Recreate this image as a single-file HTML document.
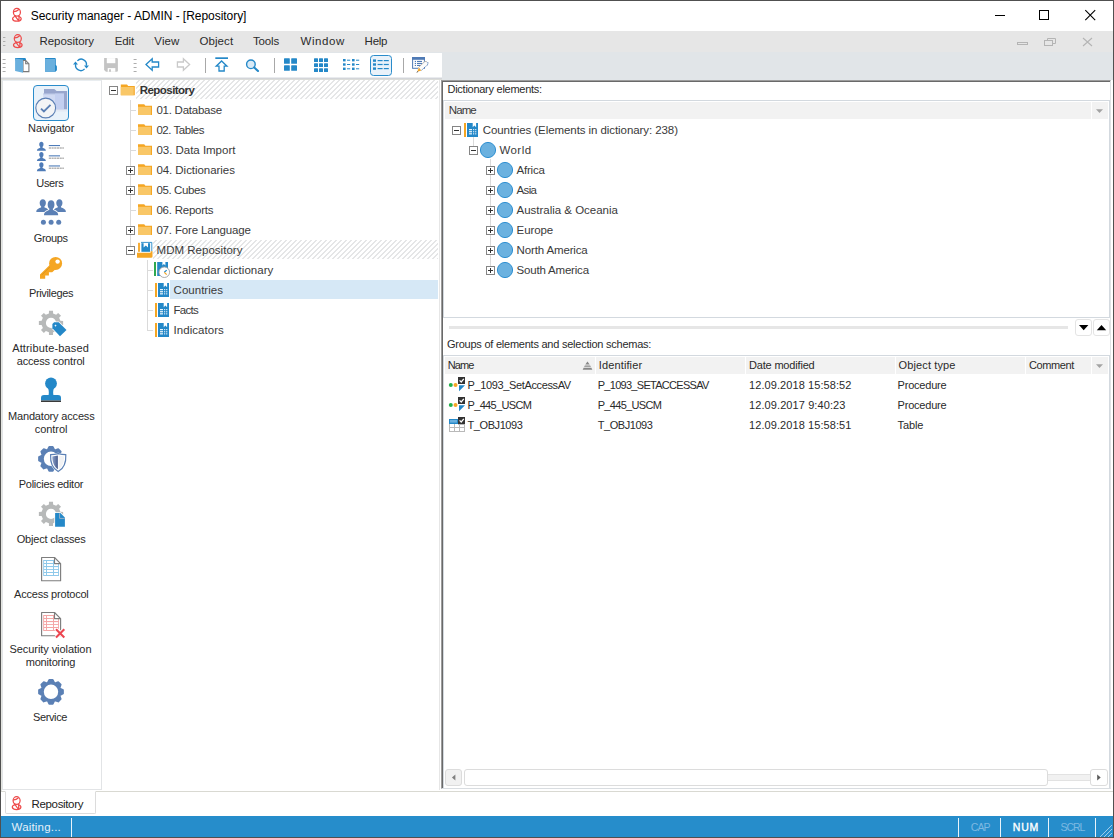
<!DOCTYPE html>
<html lang="en"><head><meta charset="utf-8"><title>Security manager - ADMIN - [Repository]</title>
<style>
html,body{margin:0;padding:0;background:#fff;}
body{width:1114px;height:838px;overflow:hidden;font-family:"Liberation Sans",sans-serif;}
#win{position:relative;width:1114px;height:838px;overflow:hidden;background:#fff;}
#win div,#win svg,#win span{position:absolute;box-sizing:border-box;}
.t{white-space:pre;line-height:16px;height:16px;}
#frame{left:0;top:0;width:1114px;height:838px;border:1px solid #505050;z-index:50;pointer-events:none;}
#titlebar{left:1px;top:1px;width:1112px;height:30px;background:#fff;}
#menubar{left:1px;top:31px;width:1112px;height:21px;background:#e6e6e6;}
#menuline{left:1px;top:52px;width:1112px;height:1px;background:#e1e5e8;}
#rebar{left:1px;top:53px;width:1112px;height:27px;background:#e1e5e8;}
#toolbar{left:1px;top:53px;width:441px;height:24px;background:#fff;}
#toolshade{left:1px;top:77px;width:441px;height:3px;background:linear-gradient(#e9ebee 0,#e9ebee 33.3%,#d3d5d9 33.3%,#d3d5d9 66.6%,#dcddd9 66.6%);}
#leftstrip{left:1px;top:80px;width:1px;height:711px;background:#e3e4df;}
#navpanel{left:2px;top:80px;width:100px;height:710px;background:#fff;border:1px solid #e2e4e6;border-top:1px solid #e9edf0;}
#treepanel{left:102px;top:80px;width:338px;height:710px;background:#fff;border-right:1px solid #e6e6e6;}
.hatch{background:repeating-linear-gradient(135deg,#fff 0,#fff 1.45px,#e5e6e7 1.45px,#e5e6e7 3.5355px);}
#navsel{left:33px;top:85px;width:36px;height:36px;border:1px solid #2a8ccb;border-radius:4px;background:#e9f2fa;}
#treesel{left:170px;top:280px;width:268px;height:19px;background:#d6e8f6;}
#rpanel{left:441px;top:80px;width:670px;height:709px;background:#fff;border-top:1px solid #9c9c9c;border-left:1px solid #9c9c9c;border-right:1px solid #e0e3e6;border-bottom:1px solid #d9dde1;}
#rpanel2{left:442px;top:81px;width:668px;height:707px;border-top:1px solid #696969;border-left:1px solid #696969;}
#dictbox{left:443px;top:100px;width:667px;height:218px;border:1px solid #d3d9df;background:#fff;}
.hd{background:#f2f2f2;}
#splitline{left:449px;top:326px;width:619px;height:3px;background:#e6e6e6;}
.sbtn{width:17px;height:17px;top:319px;border:1px solid #e4e4e4;border-radius:3px;background:#fff;}
#tablebox{left:443px;top:355px;width:667px;height:433px;border:1px solid #d3d9df;border-bottom:none;background:#fff;}
#tabline{left:1px;top:791px;width:1112px;height:1px;background:#d9d9d2;}
#tab{left:5px;top:791px;width:91px;height:23px;background:#fff;border:1px solid #dcdcdc;border-top:1px solid #fff;border-radius:0 0 2px 2px;}
#status{left:1px;top:816px;width:1112px;height:21px;background:#268dcb;}
.ssep{top:818px;width:1px;height:19px;background:#e9f3fa;}
.sb{top:769px;height:17px;border:1px solid #dcdcdc;border-radius:3px;}
#labels{left:0;top:0;width:1114px;height:838px;}

</style></head>
<body>
<div id="win">
<div id="titlebar"></div>
<div id="menubar"></div>
<div id="menuline"></div>
<div id="rebar"></div>
<div id="toolbar"></div>
<div id="toolshade"></div>
<div id="leftstrip"></div>
<div id="navpanel"></div>
<div id="treepanel"></div>
<div class="hatch" style="left:136px;top:80px;width:302px;height:19px"></div>
<div class="hatch" style="left:153px;top:240px;width:285px;height:19px"></div>
<div id="navsel"></div>
<div id="treesel"></div>
<div id="rpanel"></div>
<div id="rpanel2"></div>
<div id="dictbox"></div>
<div class="hd" style="left:445px;top:102px;width:646px;height:17px"></div>
<div class="hd" style="left:1092px;top:102px;width:16px;height:17px"></div>
<div id="splitline"></div>
<div class="sbtn" style="left:1075px"></div>
<div class="sbtn" style="left:1093px"></div>
<div id="tablebox"></div>
<div class="hd" style="left:445px;top:357px;width:150px;height:17px"></div>
<div class="hd" style="left:596px;top:357px;width:149px;height:17px"></div>
<div class="hd" style="left:746px;top:357px;width:149px;height:17px"></div>
<div class="hd" style="left:896px;top:357px;width:129px;height:17px"></div>
<div class="hd" style="left:1026px;top:357px;width:65px;height:17px"></div>
<div class="hd" style="left:1092px;top:357px;width:16px;height:17px"></div>
<div class="sb" style="left:445px;width:17px;background:#f1f1f1"></div>
<div class="sb" style="left:464px;width:584px;background:#fff"></div>
<div style="left:1048px;top:774px;width:42px;height:7px;background:#f1f1f1;border-top:1px solid #e2e2e2;border-bottom:1px solid #e2e2e2"></div>
<div class="sb" style="left:1090px;width:18px;background:#fff"></div>
<div id="tabline"></div>
<div id="tab"></div>
<div id="status"></div>
<div class="ssep" style="left:71px"></div>
<div class="ssep" style="left:958px"></div>
<div class="ssep" style="left:1000px"></div>
<div class="ssep" style="left:1048px"></div>
<div class="ssep" style="left:1095px"></div>
<svg id="icons" style="left:0;top:0" width="1114" height="838" viewBox="0 0 1114 838"><g fill="none" stroke="#ee4a4a" stroke-width="1.25" stroke-linecap="round" stroke-linejoin="round"><ellipse cx="16.9" cy="12.3" rx="3.5" ry="3.9"/><path d="M14.0 11.6 Q16.5 11.4 18.5 9.7"/><path d="M15.0 16.5C11.5 17.2 11.6 21.2 16.9 21.2C22.200000000000003 21.2 22.3 17.2 18.8 16.5"/><path d="M14.8 15.6 L18.1 20.2 M19.1 16.3 L18.9 20.6"/></g>
<g fill="none" stroke="#ee4a4a" stroke-width="1.25" stroke-linecap="round" stroke-linejoin="round"><ellipse cx="17.8" cy="38.599999999999994" rx="3.5" ry="3.9"/><path d="M14.9 37.9 Q17.4 37.699999999999996 19.4 36.0"/><path d="M15.9 42.8C12.4 43.5 12.5 47.5 17.8 47.5C23.1 47.5 23.200000000000003 43.5 19.700000000000003 42.8"/><path d="M15.700000000000001 41.9 L19.0 46.5 M20.0 42.599999999999994 L19.8 46.9"/></g>
<g fill="none" stroke="#ee4a4a" stroke-width="1.25" stroke-linecap="round" stroke-linejoin="round"><ellipse cx="16.6" cy="800.5999999999999" rx="3.5" ry="3.9"/><path d="M13.7 799.9 Q16.2 799.6999999999999 18.2 798.0"/><path d="M14.7 804.8C11.2 805.5 11.299999999999999 809.5 16.6 809.5C21.9 809.5 22.0 805.5 18.5 804.8"/><path d="M14.5 803.9 L17.8 808.5 M18.8 804.5999999999999 L18.6 808.9"/></g>
<rect x="3" y="37" width="2.4" height="1" fill="#adadad"/>
<rect x="3" y="41" width="2.4" height="1" fill="#adadad"/>
<rect x="3" y="45" width="2.4" height="1" fill="#adadad"/>
<rect x="2.6" y="59" width="3" height="1" fill="#adadad"/>
<rect x="2.6" y="63" width="3" height="1" fill="#adadad"/>
<rect x="2.6" y="67" width="3" height="1" fill="#adadad"/>
<rect x="2.6" y="71" width="3" height="1" fill="#adadad"/>
<rect x="133.6" y="59" width="3" height="1" fill="#adadad"/>
<rect x="133.6" y="63" width="3" height="1" fill="#adadad"/>
<rect x="133.6" y="67" width="3" height="1" fill="#adadad"/>
<rect x="133.6" y="71" width="3" height="1" fill="#adadad"/>
<g stroke="#000" stroke-width="1" fill="none" shape-rendering="crispEdges"><path d="M995 15.5H1005"/><rect x="1039.5" y="10.5" width="9" height="9"/></g>
<path d="M1085.3 10.2L1095.2 20.1M1095.2 10.2L1085.3 20.1" stroke="#000" stroke-width="1.1" fill="none"/>
<g stroke="#b4b4b4" stroke-width="1" fill="none"><rect x="1017.5" y="42.5" width="10" height="2"/><path d="M1047.5 40.5V38.5H1055.5V43.5H1052.5"/><rect x="1044.5" y="40.5" width="8" height="5"/><path d="M1083 38L1092 46M1092 38L1083 46" stroke-width="1.1"/></g>
<g><path d="M15.1 58.1H24.6Q26 58.1 26 59.5V60.4H15.1Z" fill="#2488c8"/><path d="M23 60.5H25.7L28.9 63.7V71.6H23Z" fill="#fff" stroke="#7a7a7a" stroke-width="1.1"/><path d="M25.7 60.5V63.7H28.9" fill="none" stroke="#7a7a7a" stroke-width="1.1"/><path d="M15.1 58.6L23 59.6V72.8L15.1 71Z" fill="#6ab0de"/></g>
<g><path d="M45.1 58.1H54.8Q55.8 58.1 55.8 59.1V64.9Q56.9 65.4 56.9 66.4V70Q56.9 71 55.8 71V71.8H45.1Z" fill="#2488c8"/><rect x="45.1" y="59" width="9.9" height="12.8" fill="#6ab0de"/></g>
<g fill="none" stroke="#2488c8" stroke-width="1.4"><path d="M77.4 60.9A5.2 5.2 0 0 1 86.3 65.6"/><path d="M84.6 68.9A5.2 5.2 0 0 1 75.7 64.2"/></g><path d="M73 64.5H78L75.5 61.4Z" fill="#2488c8"/><path d="M84 65.4H89L86.5 68.5Z" fill="#2488c8"/>
<g><path d="M104.1 58.1H116.6Q117.9 58.1 117.9 59.4V70.5Q117.9 71.8 116.6 71.8H106L104.1 70Z" fill="#c4c4c4"/><rect x="106.8" y="58.1" width="8.5" height="5.1" fill="#fff"/><rect x="107.7" y="68.1" width="7.6" height="3.7" fill="#fff"/><rect x="109.1" y="69.3" width="1.8" height="2.5" fill="#c4c4c4"/></g>
<path d="M146 64.5L152.2 58.8V62H158.6V67H152.2V70.2Z" fill="#fff" stroke="#2488c8" stroke-width="1.3" stroke-linejoin="miter"/>
<path d="M189.6 64.5L183.4 58.8V62H177.4V67H183.4V70.2Z" fill="#fff" stroke="#c9c9c9" stroke-width="1.3"/>
<rect x="205" y="58" width="1" height="15" fill="#a8a8a8"/>
<rect x="274" y="58" width="1" height="15" fill="#a8a8a8"/>
<rect x="403" y="58" width="1" height="15" fill="#a8a8a8"/>
<rect x="215.3" y="57.3" width="12.7" height="1.7" fill="#2488c8"/><path d="M221.6 61L227 66.2H224.2V71H219V66.2H216.2Z" fill="#fff" stroke="#2488c8" stroke-width="1.3"/>
<circle cx="250.9" cy="64.3" r="4.3" fill="#d9eaf6" stroke="#2488c8" stroke-width="1.4"/><path d="M254.2 67.4L258 71" stroke="#2488c8" stroke-width="2.1" stroke-linecap="round"/>
<rect x="284" y="58.2" width="5.8" height="5.6" rx="0.6" fill="#2488c8"/>
<rect x="284" y="65.2" width="5.8" height="5.6" rx="0.6" fill="#2488c8"/>
<rect x="291.2" y="58.2" width="5.8" height="5.6" rx="0.6" fill="#2488c8"/>
<rect x="291.2" y="65.2" width="5.8" height="5.6" rx="0.6" fill="#2488c8"/>
<rect x="314" y="58.2" width="4" height="3.9" rx="0.5" fill="#2488c8"/>
<rect x="314" y="63.2" width="4" height="3.9" rx="0.5" fill="#2488c8"/>
<rect x="314" y="68.2" width="4" height="3.9" rx="0.5" fill="#2488c8"/>
<rect x="319" y="58.2" width="4" height="3.9" rx="0.5" fill="#2488c8"/>
<rect x="319" y="63.2" width="4" height="3.9" rx="0.5" fill="#2488c8"/>
<rect x="319" y="68.2" width="4" height="3.9" rx="0.5" fill="#2488c8"/>
<rect x="324" y="58.2" width="4" height="3.9" rx="0.5" fill="#2488c8"/>
<rect x="324" y="63.2" width="4" height="3.9" rx="0.5" fill="#2488c8"/>
<rect x="324" y="68.2" width="4" height="3.9" rx="0.5" fill="#2488c8"/>
<rect x="343" y="59" width="2.6" height="2.4" fill="#2488c8"/><rect x="347" y="59.7" width="3.2" height="1" fill="#2488c8"/>
<rect x="343" y="63.3" width="2.6" height="2.4" fill="#2488c8"/><rect x="347" y="64.0" width="3.2" height="1" fill="#2488c8"/>
<rect x="343" y="67.6" width="2.6" height="2.4" fill="#2488c8"/><rect x="347" y="68.3" width="3.2" height="1" fill="#2488c8"/>
<rect x="352" y="59" width="2.6" height="2.4" fill="#2488c8"/><rect x="356" y="59.7" width="3.2" height="1" fill="#2488c8"/>
<rect x="352" y="63.3" width="2.6" height="2.4" fill="#2488c8"/><rect x="356" y="64.0" width="3.2" height="1" fill="#2488c8"/>
<rect x="352" y="67.6" width="2.6" height="2.4" fill="#2488c8"/><rect x="356" y="68.3" width="3.2" height="1" fill="#2488c8"/>
<rect x="370.5" y="55.5" width="21" height="20" rx="3" fill="#e9f2fa" stroke="#2a8ccb" stroke-width="1"/>
<rect x="373" y="59.4" width="3" height="2.4" fill="#2488c8"/><rect x="377.6" y="60.0" width="5" height="1.2" fill="#2488c8"/><rect x="383.8" y="60.0" width="5" height="1.2" fill="#2488c8"/>
<rect x="373" y="63.3" width="3" height="2.4" fill="#2488c8"/><rect x="377.6" y="63.9" width="5" height="1.2" fill="#2488c8"/><rect x="383.8" y="63.9" width="5" height="1.2" fill="#2488c8"/>
<rect x="373" y="67.4" width="3" height="2.4" fill="#2488c8"/><rect x="377.6" y="68.0" width="5" height="1.2" fill="#2488c8"/><rect x="383.8" y="68.0" width="5" height="1.2" fill="#2488c8"/>
<g><rect x="412.6" y="57.5" width="11.8" height="10.8" fill="#fdfdfd" stroke="#4f7ab5" stroke-width="1"/><rect x="412.1" y="57" width="12.8" height="2.8" fill="#4f7ab5"/><g fill="#4f7ab5"><rect x="414.8" y="60.9" width="1.2" height="1.1"/><rect x="417" y="60.9" width="5" height="1.1"/><rect x="414.8" y="62.9" width="1.2" height="1.1"/><rect x="417" y="62.9" width="5" height="1.1"/><rect x="414.8" y="64.9" width="1.2" height="1.1"/><rect x="417" y="64.9" width="4" height="1.1"/></g><path d="M424.9 61.4L427.8 62.2L428 64.4L421.4 70.4L418.6 67.4Z" fill="#fbfbfb"/><path d="M418.6 67.4L424.9 61.4L427 61.8" fill="none" stroke="#a9a9a9" stroke-width="0.8"/><path d="M427.8 62.2L428 64.4L421.4 70.4" fill="none" stroke="#4f7ab5" stroke-width="1" stroke-dasharray="1.4 0.7"/><path d="M418.6 67.4L421.4 70.4L417.4 71.8Z" fill="#f6a625"/><path d="M418.4 67.6L419.4 68.6L417.6 70Z" fill="#f7c98a"/><path d="M417.6 71L418.3 71.9L416.2 72.8Z" fill="#4a4a4a"/></g>
<g><path d="M44 89H54.3L56.6 91.1H67.1V109.4H44Z" fill="#98a6cd"/><rect x="43.2" y="93.6" width="20.7" height="15.8" fill="#d0daf3"/><path d="M43.2 93.9H63.9" stroke="#a9b6da" stroke-width="0.7" fill="none"/><rect x="55" y="93.6" width="8.9" height="15.8" fill="#c3cff0"/><path d="M43.2 109.4H67.1V111.5H43.2Z" fill="#dfe6f1" opacity="0.7"/><circle cx="45.7" cy="108" r="9.9" fill="#f3f4f6" stroke="#5b7fb4" stroke-width="1.1"/><path d="M41 108.6L43.9 111.4L50.5 104.9" fill="none" stroke="#5b7fb4" stroke-width="1.9"/></g>
<path fill="#4f7cb8" d="M36.9 150.8C36.9 148.65 38.8 148.26 40.2 147.67L40.3 146.89C38.8 145.91 38.7 141.8 41.4 141.8C44.1 141.8 44.0 145.91 42.5 146.89L42.6 147.67C44.0 148.26 45.9 148.65 45.9 150.8Z"/>
<rect x="48.8" y="145.0" width="11.2" height="1.1" fill="#4f7cb8"/><path d="M48.8 147.9H63.9" stroke="#b4b4b4" stroke-width="1.5" stroke-dasharray="2.2 0.5" fill="none"/>
<path fill="#4f7cb8" d="M36.9 161.1C36.9 158.95 38.8 158.56 40.2 157.97L40.3 157.19C38.8 156.21 38.7 152.1 41.4 152.1C44.1 152.1 44.0 156.21 42.5 157.19L42.6 157.97C44.0 158.56 45.9 158.95 45.9 161.1Z"/>
<rect x="48.8" y="155.29999999999998" width="11.2" height="1.1" fill="#4f7cb8"/><path d="M48.8 158.2H63.9" stroke="#b4b4b4" stroke-width="1.5" stroke-dasharray="2.2 0.5" fill="none"/>
<path fill="#4f7cb8" d="M36.9 171.2C36.9 169.05 38.8 168.66 40.2 168.07L40.3 167.29C38.8 166.31 38.7 162.2 41.4 162.2C44.1 162.2 44.0 166.31 42.5 167.29L42.6 168.07C44.0 168.66 45.9 169.05 45.9 171.2Z"/>
<rect x="48.8" y="165.39999999999998" width="11.2" height="1.1" fill="#4f7cb8"/><path d="M48.8 168.29999999999998H63.9" stroke="#b4b4b4" stroke-width="1.5" stroke-dasharray="2.2 0.5" fill="none"/>
<path fill="#5b80b5" d="M36.3 212.0C36.3 208.94 39.04 208.38 41.07 207.55L41.21 206.43C39.04 205.04 38.9 199.2 42.8 199.2C46.7 199.2 46.56 205.04 44.39 206.43L44.53 207.55C46.56 208.38 49.3 208.94 49.3 212.0Z"/>
<path fill="#5b80b5" d="M52.9 212.0C52.9 208.94 55.64 208.38 57.67 207.55L57.81 206.43C55.64 205.04 55.5 199.2 59.4 199.2C63.3 199.2 63.16 205.04 60.99 206.43L61.13 207.55C63.16 208.38 65.9 208.94 65.9 212.0Z"/>
<path d="M44 215.4C44 211.4 47 211 49 210L49 208.6C46.4 207 46.6 200 51.1 200C55.6 200 55.8 207 53.2 208.6L53.2 210C55.2 211 58.2 211.4 58.2 215.4Z" fill="#fff" stroke="#fff" stroke-width="1.6"/>
<path fill="#5b80b5" d="M44.0 215.2C44.0 211.61 47.0 210.96 49.21 209.98L49.36 208.68C47.0 207.05 46.84 200.2 51.1 200.2C55.36 200.2 55.2 207.05 52.84 208.68L52.99 209.98C55.2 210.96 58.2 211.61 58.2 215.2Z"/>
<circle cx="43.4" cy="222.3" r="2.5" fill="#5b80b5"/>
<circle cx="51.1" cy="222.3" r="2.5" fill="#5b80b5"/>
<circle cx="58.7" cy="222.3" r="2.5" fill="#5b80b5"/>
<g><path d="M50.2 264.4L40 274.4V278.7H45.2V275.5H48.9V272.3H52.2L55.2 269.6Z" fill="#f5a623"/><circle cx="55.6" cy="263.4" r="6.5" fill="#f5a623"/><circle cx="57.6" cy="261.6" r="2.2" fill="#fff"/><path d="M42 274.8L49.8 267" stroke="#c98a1c" stroke-width="0.6"/></g>
<path d="M48.91 313.53L48.98 310.77L53.02 310.77L53.09 313.53L56.14 314.79L58.15 312.89L61.01 315.75L59.11 317.76L60.37 320.81L63.13 320.88L63.13 324.92L60.37 324.99L59.11 328.04L61.01 330.05L58.15 332.91L56.14 331.01L53.09 332.27L53.02 335.03L48.98 335.03L48.91 332.27L45.86 331.01L43.85 332.91L40.99 330.05L42.89 328.04L41.63 324.99L38.87 324.92L38.87 320.88L41.63 320.81L42.89 317.76L40.99 315.75L43.85 312.89L45.86 314.79ZM56.10 322.90A5.1 5.1 0 1 0 45.90 322.90A5.1 5.1 0 1 0 56.10 322.90Z" fill="#b7b9b9" fill-rule="evenodd"/>
<path d="M52.4 324L54.1 322.3H58.7L66.5 329.9L60 336.3L52.4 328.3Z" fill="#2488c8" stroke="#fff" stroke-width="1.5" stroke-linejoin="round" paint-order="stroke"/><path d="M55.5 324.2L55.9 325.2L56.9 325.6L55.9 326L55.5 327L55.1 326L54.1 325.6L55.1 325.2Z" fill="#fff"/>
<g><circle cx="51" cy="383.5" r="5.9" fill="#2488c8"/><path d="M47.6 387L54.4 387C53.4 389.5 52.8 391.5 53.4 395.2H48.6C49.2 391.5 48.6 389.5 47.6 387Z" fill="#2488c8"/><path d="M41 400.6V397.6C41 395.8 42.4 395 44 395H58C59.6 395 61 395.8 61 397.6V400.6Z" fill="#2488c8"/><rect x="41" y="400.5" width="20" height="1.5" fill="#3a3a3a"/></g>
<path d="M47.64 449.91L49.19 446.74L52.81 446.74L54.36 449.91L54.91 450.14L58.25 448.99L60.81 451.55L59.66 454.89L59.89 455.44L63.06 456.99L63.06 460.61L59.89 462.16L59.66 462.71L60.81 466.05L58.25 468.61L54.91 467.46L54.36 467.69L52.81 470.86L49.19 470.86L47.64 467.69L47.09 467.46L43.75 468.61L41.19 466.05L42.34 462.71L42.11 462.16L38.94 460.61L38.94 456.99L42.11 455.44L42.34 454.89L41.19 451.55L43.75 448.99L47.09 450.14ZM59.00 458.80A8.0 8.0 0 1 0 43.00 458.80A8.0 8.0 0 1 0 59.00 458.80Z" fill="#5b80b5" fill-rule="evenodd" stroke="#5b80b5" stroke-width="1.6" stroke-linejoin="round"/>
<defs><linearGradient id="shg" x1="0" y1="0" x2="1" y2="0"><stop offset="0" stop-color="#8fa4ca"/><stop offset="1" stop-color="#44588a"/></linearGradient></defs>
<path d="M50.6 454.7Q54.6 454.5 58.2 453.7Q61.8 454.5 65.8 454.7C66.2 462 64 468.4 58.2 471.5C52.4 468.4 50.2 462 50.6 454.7Z" fill="#fff" stroke="#fff" stroke-width="1.8"/><path d="M50.6 454.7Q54.6 454.5 58.2 453.7Q61.8 454.5 65.8 454.7C66.2 462 64 468.4 58.2 471.5C52.4 468.4 50.2 462 50.6 454.7Z" fill="#fff" stroke="#5b80b5" stroke-width="1.2"/><path d="M57.9 455.5L52.3 456.5C52.3 462 54 466.6 57.9 469.3Z" fill="url(#shg)"/><path d="M58.6 455.5L64.1 456.5C64.1 462 62.4 466.6 58.6 469.3Z" fill="#f1f2f4"/>
<path d="M48.91 504.53L48.98 501.77L53.02 501.77L53.09 504.53L56.14 505.79L58.15 503.89L61.01 506.75L59.11 508.76L60.37 511.81L63.13 511.88L63.13 515.92L60.37 515.99L59.11 519.04L61.01 521.05L58.15 523.91L56.14 522.01L53.09 523.27L53.02 526.03L48.98 526.03L48.91 523.27L45.86 522.01L43.85 523.91L40.99 521.05L42.89 519.04L41.63 515.99L38.87 515.92L38.87 511.88L41.63 511.81L42.89 508.76L40.99 506.75L43.85 503.89L45.86 505.79ZM56.10 513.90A5.1 5.1 0 1 0 45.90 513.90A5.1 5.1 0 1 0 56.10 513.90Z" fill="#b7b9b9" fill-rule="evenodd"/>
<path d="M55.1 513.1H60.4L64.9 517.6V526.8H55.1Z" fill="#2488c8" stroke="#fff" stroke-width="1.6" paint-order="stroke"/><path d="M59.6 513.3V518.4H64.7" fill="none" stroke="#a3b6c8" stroke-width="0.9"/>
<g><clipPath id="shc1"><path d="M41 557.5H54.5V563.7H61V581.5H41Z"/></clipPath><path d="M41.6 557.5H54.5L60.6 563.6V580.7H41.6Z" fill="#fff" stroke="#7e7e7e" stroke-width="1.15" stroke-linejoin="round"/><g clip-path="url(#shc1)"><rect x="43.2" y="560.0" width="15.8" height="16" fill="#8fc9ea"/>
<rect x="44.1" y="561.0" width="1.9" height="2" fill="#fff"/>
<rect x="47.0" y="561.0" width="6.0" height="2" fill="#fff"/>
<rect x="54.0" y="561.0" width="4.1" height="2" fill="#fff"/>
<rect x="44.1" y="564.0" width="1.9" height="2" fill="#fff"/>
<rect x="47.0" y="564.0" width="6.0" height="2" fill="#fff"/>
<rect x="54.0" y="564.0" width="4.1" height="2" fill="#fff"/>
<rect x="44.1" y="567.1" width="1.9" height="2" fill="#fff"/>
<rect x="47.0" y="567.1" width="6.0" height="2" fill="#fff"/>
<rect x="54.0" y="567.1" width="4.1" height="2" fill="#fff"/>
<rect x="44.1" y="570.0" width="1.9" height="2" fill="#fff"/>
<rect x="47.0" y="570.0" width="6.0" height="2" fill="#fff"/>
<rect x="54.0" y="570.0" width="4.1" height="2" fill="#fff"/>
<rect x="44.1" y="573.0" width="1.9" height="2" fill="#fff"/>
<rect x="47.0" y="573.0" width="6.0" height="2" fill="#fff"/>
<rect x="54.0" y="573.0" width="4.1" height="2" fill="#fff"/>
</g><path d="M54.5 557.5V563.6H60.6" fill="none" stroke="#7e7e7e" stroke-width="1.15" stroke-linejoin="round"/></g>
<g><clipPath id="shc2"><path d="M41 612.5H54.5V618.7H61V636.5H41Z"/></clipPath><path d="M41.6 612.5H54.5L60.6 618.6V635.7H41.6Z" fill="#fff" stroke="#7e7e7e" stroke-width="1.15" stroke-linejoin="round"/><g clip-path="url(#shc2)"><rect x="43.2" y="615.0" width="15.8" height="16" fill="#f4a6a6"/>
<rect x="44.1" y="616.0" width="1.9" height="2" fill="#fff"/>
<rect x="47.0" y="616.0" width="6.0" height="2" fill="#fff"/>
<rect x="54.0" y="616.0" width="4.1" height="2" fill="#fff"/>
<rect x="44.1" y="619.0" width="1.9" height="2" fill="#fff"/>
<rect x="47.0" y="619.0" width="6.0" height="2" fill="#fff"/>
<rect x="54.0" y="619.0" width="4.1" height="2" fill="#fff"/>
<rect x="44.1" y="622.1" width="1.9" height="2" fill="#fff"/>
<rect x="47.0" y="622.1" width="6.0" height="2" fill="#fff"/>
<rect x="54.0" y="622.1" width="4.1" height="2" fill="#fff"/>
<rect x="44.1" y="625.0" width="1.9" height="2" fill="#fff"/>
<rect x="47.0" y="625.0" width="6.0" height="2" fill="#fff"/>
<rect x="54.0" y="625.0" width="4.1" height="2" fill="#fff"/>
<rect x="44.1" y="628.0" width="1.9" height="2" fill="#fff"/>
<rect x="47.0" y="628.0" width="6.0" height="2" fill="#fff"/>
<rect x="54.0" y="628.0" width="4.1" height="2" fill="#fff"/>
</g><path d="M54.5 612.5V618.6H60.6" fill="none" stroke="#7e7e7e" stroke-width="1.15" stroke-linejoin="round"/></g>
<path d="M56 629.2L64.3 637.4M64.3 629.2L56 637.4" stroke="#fff" stroke-width="4" fill="none"/><path d="M56 629.2L64.3 637.4M64.3 629.2L56 637.4" stroke="#ec4650" stroke-width="2.1" fill="none"/>
<path d="M47.64 682.91L49.19 679.74L52.81 679.74L54.36 682.91L54.91 683.14L58.25 681.99L60.81 684.55L59.66 687.89L59.89 688.44L63.06 689.99L63.06 693.61L59.89 695.16L59.66 695.71L60.81 699.05L58.25 701.61L54.91 700.46L54.36 700.69L52.81 703.86L49.19 703.86L47.64 700.69L47.09 700.46L43.75 701.61L41.19 699.05L42.34 695.71L42.11 695.16L38.94 693.61L38.94 689.99L42.11 688.44L42.34 687.89L41.19 684.55L43.75 681.99L47.09 683.14ZM59.00 691.80A8.0 8.0 0 1 0 43.00 691.80A8.0 8.0 0 1 0 59.00 691.80Z" fill="#5b80b5" fill-rule="evenodd" stroke="#5b80b5" stroke-width="1.6" stroke-linejoin="round"/>
<rect x="130" y="100" width="1" height="146" fill="#dadada"/>
<rect x="131" y="110" width="5" height="1" fill="#dadada"/>
<rect x="131" y="130" width="5" height="1" fill="#dadada"/>
<rect x="131" y="150" width="5" height="1" fill="#dadada"/>
<rect x="131" y="210" width="5" height="1" fill="#dadada"/>
<rect x="147" y="260" width="1" height="71" fill="#dadada"/>
<rect x="148" y="270" width="5" height="1" fill="#dadada"/>
<rect x="148" y="290" width="5" height="1" fill="#dadada"/>
<rect x="148" y="310" width="5" height="1" fill="#dadada"/>
<rect x="148" y="330" width="5" height="1" fill="#dadada"/>
<rect x="109" y="86" width="9" height="9" fill="#fff"/><rect x="109.5" y="86.5" width="8" height="8" fill="#fff" stroke="#858585" stroke-width="1"/><rect x="111" y="90" width="5" height="1" fill="#333"/>
<g><path d="M120.8 84.4H127.0L128.2 86.0H134.8V95.2H120.8Z" fill="#f5a623"/><rect x="120.8" y="87.0" width="12.9" height="8.2" fill="#f9c767"/></g>
<g><path d="M138 104.2H144.2L145.4 105.8H152V115H138Z" fill="#f5a623"/><rect x="138" y="106.8" width="12.9" height="8.2" fill="#f9c767"/></g>
<g><path d="M138 124.2H144.2L145.4 125.8H152V135H138Z" fill="#f5a623"/><rect x="138" y="126.8" width="12.9" height="8.2" fill="#f9c767"/></g>
<g><path d="M138 144.2H144.2L145.4 145.8H152V155H138Z" fill="#f5a623"/><rect x="138" y="146.8" width="12.9" height="8.2" fill="#f9c767"/></g>
<g><path d="M138 164.2H144.2L145.4 165.8H152V175H138Z" fill="#f5a623"/><rect x="138" y="166.8" width="12.9" height="8.2" fill="#f9c767"/></g>
<g><path d="M138 184.2H144.2L145.4 185.8H152V195H138Z" fill="#f5a623"/><rect x="138" y="186.8" width="12.9" height="8.2" fill="#f9c767"/></g>
<g><path d="M138 204.2H144.2L145.4 205.8H152V215H138Z" fill="#f5a623"/><rect x="138" y="206.8" width="12.9" height="8.2" fill="#f9c767"/></g>
<g><path d="M138 224.2H144.2L145.4 225.8H152V235H138Z" fill="#f5a623"/><rect x="138" y="226.8" width="12.9" height="8.2" fill="#f9c767"/></g>
<rect x="126" y="166" width="9" height="9" fill="#fff"/><rect x="126.5" y="166.5" width="8" height="8" fill="#fff" stroke="#858585" stroke-width="1"/><rect x="128" y="170" width="5" height="1" fill="#333"/><rect x="130" y="168" width="1" height="5" fill="#333"/>
<rect x="126" y="186" width="9" height="9" fill="#fff"/><rect x="126.5" y="186.5" width="8" height="8" fill="#fff" stroke="#858585" stroke-width="1"/><rect x="128" y="190" width="5" height="1" fill="#333"/><rect x="130" y="188" width="1" height="5" fill="#333"/>
<rect x="126" y="226" width="9" height="9" fill="#fff"/><rect x="126.5" y="226.5" width="8" height="8" fill="#fff" stroke="#858585" stroke-width="1"/><rect x="128" y="230" width="5" height="1" fill="#333"/><rect x="130" y="228" width="1" height="5" fill="#333"/>
<rect x="126" y="246" width="9" height="9" fill="#fff"/><rect x="126.5" y="246.5" width="8" height="8" fill="#fff" stroke="#858585" stroke-width="1"/><rect x="128" y="250" width="5" height="1" fill="#333"/>
<g><rect x="141.4" y="243.2" width="8.7" height="8.6" fill="#2488c8"/><path d="M141 242.4H151.8V251.4" fill="none" stroke="#2488c8" stroke-width="0.9"/><path d="M143.6 243V247.4L145.8 245.6L148 247.4V243Z" fill="#fff"/><rect x="138.1" y="242.8" width="1.8" height="9" fill="#f5a623"/><path d="M137 252.8H150.6V251.2H152.5V256.4Q152.5 257.8 151 257.8H137Z" fill="#f5a623"/></g>
<g><rect x="154" y="262" width="2" height="14" fill="#2fa84f"/><path d="M157.2 262H162.4V265.4L163.9 264L165.4 265.4V262H168V276H157.2Z" fill="#2488c8"/><circle cx="164.3" cy="272.2" r="5.3" fill="#fff" stroke="#a2a2a2" stroke-width="0.9"/><path d="M166.7 270.1L164.3 272.3" stroke="#2488c8" stroke-width="1.2" fill="none"/><path d="M164.3 272.3L166.7 274.7" stroke="#f5a623" stroke-width="1.2" fill="none"/></g>
<g><rect x="155" y="283" width="2" height="14" fill="#f5a623"/><path d="M158 283H163.7V287.2L165.4 285.6L167.1 287.2V283H169V297H158Z" fill="#2488c8"/>
<rect x="160" y="289.1" width="3" height="1.1" fill="#fff"/><rect x="164.1" y="289.1" width="1.1" height="1.1" fill="#fff"/><rect x="166.2" y="289.1" width="1.1" height="1.1" fill="#fff"/>
<rect x="160" y="291.2" width="3" height="1.1" fill="#fff"/><rect x="164.1" y="291.2" width="1.1" height="1.1" fill="#fff"/><rect x="166.2" y="291.2" width="1.1" height="1.1" fill="#fff"/>
<rect x="160" y="293.3" width="3" height="1.1" fill="#fff"/><rect x="164.1" y="293.3" width="1.1" height="1.1" fill="#fff"/><rect x="166.2" y="293.3" width="1.1" height="1.1" fill="#fff"/>
</g>
<g><rect x="155" y="303" width="2" height="14" fill="#f5a623"/><path d="M158 303H163.7V307.2L165.4 305.6L167.1 307.2V303H169V317H158Z" fill="#2488c8"/>
<rect x="160" y="309.1" width="3" height="1.1" fill="#fff"/><rect x="164.1" y="309.1" width="1.1" height="1.1" fill="#fff"/><rect x="166.2" y="309.1" width="1.1" height="1.1" fill="#fff"/>
<rect x="160" y="311.2" width="3" height="1.1" fill="#fff"/><rect x="164.1" y="311.2" width="1.1" height="1.1" fill="#fff"/><rect x="166.2" y="311.2" width="1.1" height="1.1" fill="#fff"/>
<rect x="160" y="313.3" width="3" height="1.1" fill="#fff"/><rect x="164.1" y="313.3" width="1.1" height="1.1" fill="#fff"/><rect x="166.2" y="313.3" width="1.1" height="1.1" fill="#fff"/>
</g>
<g><rect x="155" y="323" width="2" height="14" fill="#f5a623"/><path d="M158 323H163.7V327.2L165.4 325.6L167.1 327.2V323H169V337H158Z" fill="#2488c8"/>
<rect x="160" y="329.1" width="3" height="1.1" fill="#fff"/><rect x="164.1" y="329.1" width="1.1" height="1.1" fill="#fff"/><rect x="166.2" y="329.1" width="1.1" height="1.1" fill="#fff"/>
<rect x="160" y="331.2" width="3" height="1.1" fill="#fff"/><rect x="164.1" y="331.2" width="1.1" height="1.1" fill="#fff"/><rect x="166.2" y="331.2" width="1.1" height="1.1" fill="#fff"/>
<rect x="160" y="333.3" width="3" height="1.1" fill="#fff"/><rect x="164.1" y="333.3" width="1.1" height="1.1" fill="#fff"/><rect x="166.2" y="333.3" width="1.1" height="1.1" fill="#fff"/>
</g>
<rect x="473" y="137" width="1" height="9" fill="#dadada"/>
<rect x="490" y="159" width="1" height="112" fill="#dadada"/>
<rect x="452" y="126" width="9" height="9" fill="#fff"/><rect x="452.5" y="126.5" width="8" height="8" fill="#fff" stroke="#858585" stroke-width="1"/><rect x="454" y="130" width="5" height="1" fill="#333"/>
<g><rect x="464" y="123" width="2" height="14" fill="#f5a623"/><path d="M467 123H472.7V127.2L474.4 125.6L476.1 127.2V123H478V137H467Z" fill="#2488c8"/>
<rect x="469" y="129.1" width="3" height="1.1" fill="#fff"/><rect x="473.1" y="129.1" width="1.1" height="1.1" fill="#fff"/><rect x="475.2" y="129.1" width="1.1" height="1.1" fill="#fff"/>
<rect x="469" y="131.2" width="3" height="1.1" fill="#fff"/><rect x="473.1" y="131.2" width="1.1" height="1.1" fill="#fff"/><rect x="475.2" y="131.2" width="1.1" height="1.1" fill="#fff"/>
<rect x="469" y="133.3" width="3" height="1.1" fill="#fff"/><rect x="473.1" y="133.3" width="1.1" height="1.1" fill="#fff"/><rect x="475.2" y="133.3" width="1.1" height="1.1" fill="#fff"/>
</g>
<rect x="469" y="146" width="9" height="9" fill="#fff"/><rect x="469.5" y="146.5" width="8" height="8" fill="#fff" stroke="#858585" stroke-width="1"/><rect x="471" y="150" width="5" height="1" fill="#333"/>
<circle cx="488" cy="150" r="7.6" fill="#6bb1df" stroke="#2d8fd1" stroke-width="1"/>
<rect x="486" y="166" width="9" height="9" fill="#fff"/><rect x="486.5" y="166.5" width="8" height="8" fill="#fff" stroke="#858585" stroke-width="1"/><rect x="488" y="170" width="5" height="1" fill="#333"/><rect x="490" y="168" width="1" height="5" fill="#333"/>
<circle cx="505" cy="170" r="7.6" fill="#6bb1df" stroke="#2d8fd1" stroke-width="1"/>
<rect x="486" y="186" width="9" height="9" fill="#fff"/><rect x="486.5" y="186.5" width="8" height="8" fill="#fff" stroke="#858585" stroke-width="1"/><rect x="488" y="190" width="5" height="1" fill="#333"/><rect x="490" y="188" width="1" height="5" fill="#333"/>
<circle cx="505" cy="190" r="7.6" fill="#6bb1df" stroke="#2d8fd1" stroke-width="1"/>
<rect x="486" y="206" width="9" height="9" fill="#fff"/><rect x="486.5" y="206.5" width="8" height="8" fill="#fff" stroke="#858585" stroke-width="1"/><rect x="488" y="210" width="5" height="1" fill="#333"/><rect x="490" y="208" width="1" height="5" fill="#333"/>
<circle cx="505" cy="210" r="7.6" fill="#6bb1df" stroke="#2d8fd1" stroke-width="1"/>
<rect x="486" y="226" width="9" height="9" fill="#fff"/><rect x="486.5" y="226.5" width="8" height="8" fill="#fff" stroke="#858585" stroke-width="1"/><rect x="488" y="230" width="5" height="1" fill="#333"/><rect x="490" y="228" width="1" height="5" fill="#333"/>
<circle cx="505" cy="230" r="7.6" fill="#6bb1df" stroke="#2d8fd1" stroke-width="1"/>
<rect x="486" y="246" width="9" height="9" fill="#fff"/><rect x="486.5" y="246.5" width="8" height="8" fill="#fff" stroke="#858585" stroke-width="1"/><rect x="488" y="250" width="5" height="1" fill="#333"/><rect x="490" y="248" width="1" height="5" fill="#333"/>
<circle cx="505" cy="250" r="7.6" fill="#6bb1df" stroke="#2d8fd1" stroke-width="1"/>
<rect x="486" y="266" width="9" height="9" fill="#fff"/><rect x="486.5" y="266.5" width="8" height="8" fill="#fff" stroke="#858585" stroke-width="1"/><rect x="488" y="270" width="5" height="1" fill="#333"/><rect x="490" y="268" width="1" height="5" fill="#333"/>
<circle cx="505" cy="270" r="7.6" fill="#6bb1df" stroke="#2d8fd1" stroke-width="1"/>
<path d="M1096 109.2H1103L1099.5 113Z" fill="#a3a3a3"/><path d="M1096 364.2H1103L1099.5 368Z" fill="#a3a3a3"/>
<path d="M1079 325H1088.4L1083.7 330.2Z" fill="#000"/><path d="M1096.8 330.2H1106.2L1101.5 325Z" fill="#000"/>
<g fill="#878787"><path d="M587.5 361.6L589.7 364.6H585.3Z"/><path d="M584.9 365.4H590.1L591 366.8H584Z"/><path d="M583.6 367.8H591.4L592.3 369.8H582.7Z"/></g>
<g><circle cx="450.8" cy="385" r="2" fill="#22b14c"/><circle cx="455.5" cy="385" r="2" fill="#f5a623"/><rect x="458" y="377" width="7" height="7" fill="#333"/><path d="M459.6 380.4L461.2 382L463.8 378.8" fill="none" stroke="#fff" stroke-width="1.2"/><path d="M459 385.3H465L459 391.2Z" fill="#2488c8"/></g>
<g><circle cx="450.8" cy="405" r="2" fill="#22b14c"/><circle cx="455.5" cy="405" r="2" fill="#f5a623"/><rect x="458" y="397" width="7" height="7" fill="#333"/><path d="M459.6 400.4L461.2 402L463.8 398.8" fill="none" stroke="#fff" stroke-width="1.2"/><path d="M459 405.3H465L459 411.2Z" fill="#2488c8"/></g>
<g><rect x="449" y="419" width="9" height="5" fill="#2488c8"/><rect x="450" y="420" width="7" height="2.6" fill="#6ab0de"/><g fill="#b9b9b9"><rect x="449" y="424" width="1" height="8"/><rect x="454" y="424" width="1" height="8"/><rect x="459" y="424" width="1" height="8"/><rect x="464" y="424" width="1" height="8"/><rect x="449" y="427" width="16" height="1"/><rect x="449" y="431" width="16" height="1"/><rect x="458" y="424" width="7" height="1"/></g><rect x="458" y="417" width="7" height="7" fill="#333"/><path d="M459.6 420.4L461.2 422L463.8 418.8" fill="none" stroke="#fff" stroke-width="1.2"/></g>
<path d="M455.4 774.6L451.9 777.6L455.4 780.6Z" fill="#808080"/><path d="M1097.2 774.6L1100.7 777.6L1097.2 780.6Z" fill="#5a5a5a"/>
<g stroke="#9ecbea" stroke-width="1" fill="none"><path d="M1100 837L1112 825M1104 837L1112 829M1108 837L1112 833"/></g></svg>
<div id="frame"></div>

<div id="labels">
<span class="t" style="left:30.70px;top:7.74px;font-size:12.0px;letter-spacing:-0.044px;color:#000;">Security manager - ADMIN - [Repository]</span>
<span class="t" style="left:39.40px;top:32.82px;font-size:11.5px;letter-spacing:-0.030px;color:#2b2b2b;">Repository</span>
<span class="t" style="left:114.80px;top:32.82px;font-size:11.5px;letter-spacing:-0.139px;color:#2b2b2b;">Edit</span>
<span class="t" style="left:154.30px;top:32.82px;font-size:11.5px;letter-spacing:0.127px;color:#2b2b2b;">View</span>
<span class="t" style="left:199.40px;top:32.82px;font-size:11.5px;letter-spacing:0.093px;color:#2b2b2b;">Object</span>
<span class="t" style="left:252.90px;top:32.82px;font-size:11.5px;letter-spacing:-0.112px;color:#2b2b2b;">Tools</span>
<span class="t" style="left:300.50px;top:32.82px;font-size:11.5px;letter-spacing:0.600px;color:#2b2b2b;">Window</span>
<span class="t" style="left:364.60px;top:32.82px;font-size:11.5px;letter-spacing:-0.250px;color:#2b2b2b;">Help</span>
<span class="t" style="left:28.10px;top:119.99px;font-size:11px;letter-spacing:-0.110px;color:#2a2a2a;">Navigator</span>
<span class="t" style="left:36.30px;top:174.99px;font-size:11px;letter-spacing:-0.331px;color:#2a2a2a;">Users</span>
<span class="t" style="left:33.80px;top:229.99px;font-size:11px;letter-spacing:-0.394px;color:#2a2a2a;">Groups</span>
<span class="t" style="left:28.90px;top:284.99px;font-size:11px;letter-spacing:-0.332px;color:#2a2a2a;">Privileges</span>
<span class="t" style="left:12.20px;top:339.89px;font-size:11px;letter-spacing:0.143px;color:#2a2a2a;">Attribute-based</span>
<span class="t" style="left:16.70px;top:352.79px;font-size:11px;letter-spacing:-0.170px;color:#2a2a2a;">access control</span>
<span class="t" style="left:8.00px;top:407.89px;font-size:11px;letter-spacing:-0.171px;color:#2a2a2a;">Mandatory access</span>
<span class="t" style="left:34.70px;top:420.89px;font-size:11px;letter-spacing:-0.036px;color:#2a2a2a;">control</span>
<span class="t" style="left:18.80px;top:475.99px;font-size:11px;letter-spacing:-0.277px;color:#2a2a2a;">Policies editor</span>
<span class="t" style="left:16.70px;top:530.69px;font-size:11px;letter-spacing:-0.194px;color:#2a2a2a;">Object classes</span>
<span class="t" style="left:14.00px;top:585.89px;font-size:11px;letter-spacing:-0.203px;color:#2a2a2a;">Access protocol</span>
<span class="t" style="left:9.50px;top:640.89px;font-size:11px;letter-spacing:-0.068px;color:#2a2a2a;">Security violation</span>
<span class="t" style="left:25.70px;top:653.69px;font-size:11px;letter-spacing:-0.184px;color:#2a2a2a;">monitoring</span>
<span class="t" style="left:32.90px;top:709.19px;font-size:11px;letter-spacing:-0.347px;color:#2a2a2a;">Service</span>
<span class="t" style="left:139.70px;top:81.82px;font-size:11.5px;letter-spacing:-0.541px;color:#333;font-weight:bold;">Repository</span>
<span class="t" style="left:156.40px;top:101.82px;font-size:11.5px;letter-spacing:-0.246px;color:#3a3a3a;">01. Database</span>
<span class="t" style="left:156.40px;top:121.82px;font-size:11.5px;letter-spacing:-0.458px;color:#3a3a3a;">02. Tables</span>
<span class="t" style="left:156.40px;top:141.82px;font-size:11.5px;letter-spacing:-0.019px;color:#3a3a3a;">03. Data Import</span>
<span class="t" style="left:156.40px;top:161.82px;font-size:11.5px;letter-spacing:-0.051px;color:#3a3a3a;">04. Dictionaries</span>
<span class="t" style="left:156.40px;top:181.82px;font-size:11.5px;letter-spacing:-0.390px;color:#3a3a3a;">05. Cubes</span>
<span class="t" style="left:156.40px;top:201.82px;font-size:11.5px;letter-spacing:-0.225px;color:#3a3a3a;">06. Reports</span>
<span class="t" style="left:156.40px;top:221.82px;font-size:11.5px;letter-spacing:-0.168px;color:#3a3a3a;">07. Fore Language</span>
<span class="t" style="left:156.60px;top:241.82px;font-size:11.5px;letter-spacing:0.013px;color:#3a3a3a;">MDM Repository</span>
<span class="t" style="left:173.60px;top:261.82px;font-size:11.5px;letter-spacing:0.034px;color:#3a3a3a;">Calendar dictionary</span>
<span class="t" style="left:173.60px;top:281.82px;font-size:11.5px;letter-spacing:0.010px;color:#3a3a3a;">Countries</span>
<span class="t" style="left:173.60px;top:301.82px;font-size:11.5px;letter-spacing:-0.754px;color:#3a3a3a;">Facts</span>
<span class="t" style="left:173.60px;top:321.82px;font-size:11.5px;letter-spacing:0.038px;color:#3a3a3a;">Indicators</span>
<span class="t" style="left:447.50px;top:81.09px;font-size:11px;letter-spacing:-0.266px;color:#2a2a2a;">Dictionary elements:</span>
<span class="t" style="left:448.80px;top:101.52px;font-size:11.5px;letter-spacing:-0.925px;color:#3a3a3a;">Name</span>
<span class="t" style="left:482.70px;top:121.82px;font-size:11.5px;letter-spacing:-0.075px;color:#3a3a3a;">Countries (Elements in dictionary: 238)</span>
<span class="t" style="left:499.40px;top:141.82px;font-size:11.5px;letter-spacing:0.469px;color:#3a3a3a;">World</span>
<span class="t" style="left:516.60px;top:161.82px;font-size:11.5px;letter-spacing:-0.239px;color:#3a3a3a;">Africa</span>
<span class="t" style="left:516.60px;top:181.82px;font-size:11.5px;letter-spacing:-0.690px;color:#3a3a3a;">Asia</span>
<span class="t" style="left:516.60px;top:201.82px;font-size:11.5px;letter-spacing:-0.019px;color:#3a3a3a;">Australia &amp; Oceania</span>
<span class="t" style="left:516.60px;top:221.82px;font-size:11.5px;letter-spacing:-0.117px;color:#3a3a3a;">Europe</span>
<span class="t" style="left:516.60px;top:241.82px;font-size:11.5px;letter-spacing:-0.141px;color:#3a3a3a;">North America</span>
<span class="t" style="left:516.60px;top:261.82px;font-size:11.5px;letter-spacing:-0.194px;color:#3a3a3a;">South America</span>
<span class="t" style="left:447.00px;top:336.09px;font-size:11px;letter-spacing:-0.240px;color:#2a2a2a;">Groups of elements and selection schemas:</span>
<span class="t" style="left:447.80px;top:356.89px;font-size:11px;letter-spacing:-0.947px;color:#2a2a2a;">Name</span>
<span class="t" style="left:598.80px;top:356.89px;font-size:11px;letter-spacing:0.123px;color:#2a2a2a;">Identifier</span>
<span class="t" style="left:749.00px;top:356.89px;font-size:11px;letter-spacing:-0.181px;color:#2a2a2a;">Date modified</span>
<span class="t" style="left:898.60px;top:356.89px;font-size:11px;letter-spacing:0.116px;color:#2a2a2a;">Object type</span>
<span class="t" style="left:1028.90px;top:356.89px;font-size:11px;letter-spacing:-0.380px;color:#2a2a2a;">Comment</span>
<span class="t" style="left:467.50px;top:376.99px;font-size:11px;letter-spacing:-0.363px;color:#2a2a2a;">P_1093_SetAccessAV</span>
<span class="t" style="left:597.70px;top:376.99px;font-size:11px;letter-spacing:-0.707px;color:#2a2a2a;">P_1093_SETACCESSAV</span>
<span class="t" style="left:749.00px;top:376.99px;font-size:11px;letter-spacing:0.082px;color:#2a2a2a;">12.09.2018 15:58:52</span>
<span class="t" style="left:897.60px;top:376.99px;font-size:11px;letter-spacing:-0.219px;color:#2a2a2a;">Procedure</span>
<span class="t" style="left:467.50px;top:396.99px;font-size:11px;letter-spacing:-0.657px;color:#2a2a2a;">P_445_USCM</span>
<span class="t" style="left:597.70px;top:396.99px;font-size:11px;letter-spacing:-0.679px;color:#2a2a2a;">P_445_USCM</span>
<span class="t" style="left:749.00px;top:396.99px;font-size:11px;letter-spacing:0.093px;color:#2a2a2a;">12.09.2017 9:40:23</span>
<span class="t" style="left:897.60px;top:396.99px;font-size:11px;letter-spacing:-0.219px;color:#2a2a2a;">Procedure</span>
<span class="t" style="left:467.50px;top:416.99px;font-size:11px;letter-spacing:-0.413px;color:#2a2a2a;">T_OBJ1093</span>
<span class="t" style="left:597.70px;top:416.99px;font-size:11px;letter-spacing:-0.438px;color:#2a2a2a;">T_OBJ1093</span>
<span class="t" style="left:749.00px;top:416.99px;font-size:11px;letter-spacing:0.082px;color:#2a2a2a;">12.09.2018 15:58:51</span>
<span class="t" style="left:897.60px;top:416.99px;font-size:11px;letter-spacing:-0.124px;color:#2a2a2a;">Table</span>
<span class="t" style="left:31.50px;top:796.02px;font-size:11.5px;letter-spacing:-0.341px;color:#222;">Repository</span>
<span class="t" style="left:11.50px;top:819.02px;font-size:11.5px;letter-spacing:0.199px;color:#e4f0f9;">Waiting...</span>
<span class="t" style="left:970.80px;top:819.26px;font-size:10.5px;letter-spacing:-0.995px;color:#7db9e2;">CAP</span>
<span class="t" style="left:1012.80px;top:819.26px;font-size:10.5px;letter-spacing:0.794px;color:#ffffff;-webkit-text-stroke:0.35px #fff;">NUM</span>
<span class="t" style="left:1060.40px;top:819.26px;font-size:10.5px;letter-spacing:-1.000px;color:#7db9e2;">SCRL</span>
</div>
</div>
</body></html>
